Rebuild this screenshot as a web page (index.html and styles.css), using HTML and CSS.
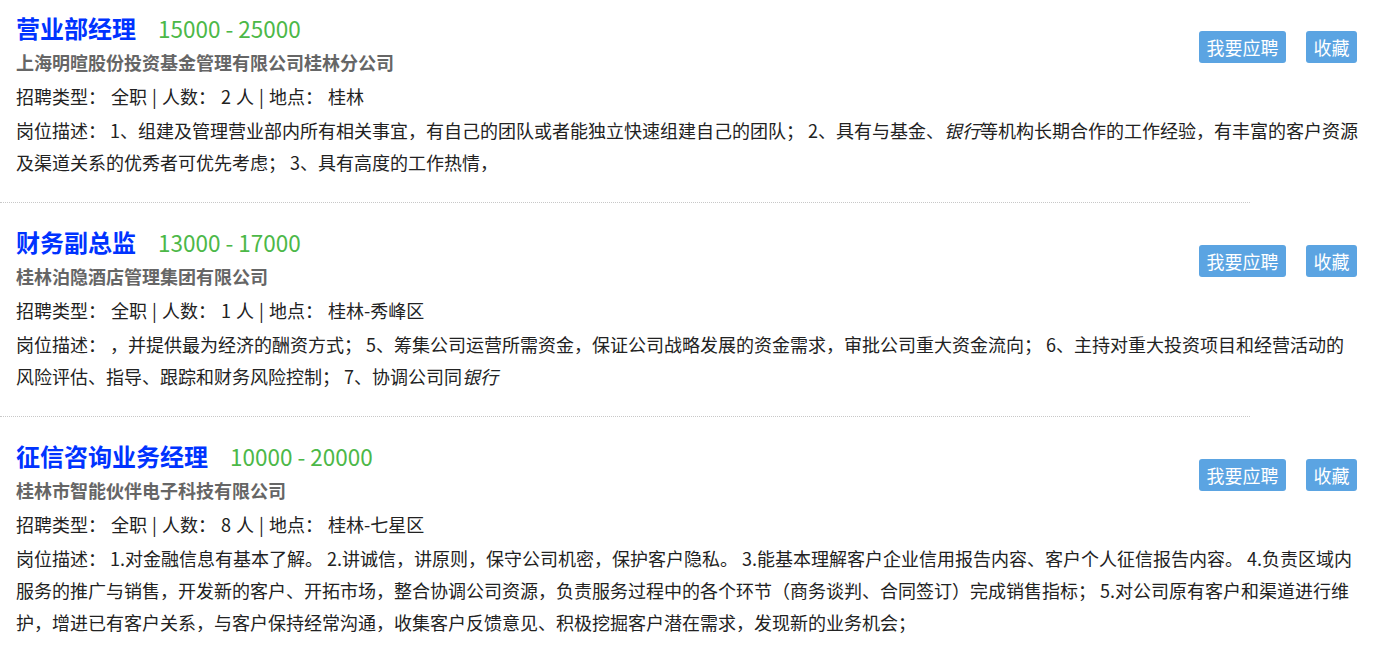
FILE: index.html
```html
<!DOCTYPE html>
<html lang="zh-CN">
<head>
  <meta charset="UTF-8" />
  <meta name="viewport" content="width=device-width, initial-scale=1.0" />
  <title>职位列表</title>
  <link rel="stylesheet" href="styles.css">
</head>
<body>
  <main class="job-list">
    <div class="job">
      <div class="job-actions">
        <a href="#" class="btn">我要应聘</a>
        <a href="#" class="btn">收藏</a>
      </div>
      <div class="job-head">
        <a href="#" class="job-title">营业部经理</a>
        <span class="salary">15000 - 25000</span>
      </div>
      <div class="company">上海明暄股份投资基金管理有限公司桂林分公司</div>
      <div class="meta">招聘类型： 全职 | 人数： 2 人 | 地点： 桂林</div>
      <p class="desc">岗位描述： 1、组建及管理营业部内所有相关事宜，有自己的团队或者能独立快速组建自己的团队； 2、具有与基金、<em>银行</em>等机构长期合作的工作经验，有丰富的客户资源及渠道关系的优秀者可优先考虑； 3、具有高度的工作热情，</p>
    </div>

    <div class="job">
      <div class="job-actions">
        <a href="#" class="btn">我要应聘</a>
        <a href="#" class="btn">收藏</a>
      </div>
      <div class="job-head">
        <a href="#" class="job-title">财务副总监</a>
        <span class="salary">13000 - 17000</span>
      </div>
      <div class="company">桂林泊隐酒店管理集团有限公司</div>
      <div class="meta">招聘类型： 全职 | 人数： 1 人 | 地点： 桂林-秀峰区</div>
      <p class="desc">岗位描述： ，并提供最为经济的酬资方式； 5、筹集公司运营所需资金，保证公司战略发展的资金需求，审批公司重大资金流向； 6、主持对重大投资项目和经营活动的风险评估、指导、跟踪和财务风险控制； 7、协调公司同<em>银行</em></p>
    </div>

    <div class="job">
      <div class="job-actions">
        <a href="#" class="btn">我要应聘</a>
        <a href="#" class="btn">收藏</a>
      </div>
      <div class="job-head">
        <a href="#" class="job-title">征信咨询业务经理</a>
        <span class="salary">10000 - 20000</span>
      </div>
      <div class="company">桂林市智能伙伴电子科技有限公司</div>
      <div class="meta">招聘类型： 全职 | 人数： 8 人 | 地点： 桂林-七星区</div>
      <p class="desc">岗位描述： 1.对金融信息有基本了解。 2.讲诚信，讲原则，保守公司机密，保护客户隐私。 3.能基本理解客户企业信用报告内容、客户个人征信报告内容。 4.负责区域内服务的推广与销售，开发新的客户、开拓市场，整合协调公司资源，负责服务过程中的各个环节（商务谈判、合同签订）完成销售指标； 5.对公司原有客户和渠道进行维护，增进已有客户关系，与客户保持经常沟通，收集客户反馈意见、积极挖掘客户潜在需求，发现新的业务机会；</p>
    </div>
  </main>
</body>
</html>
```

FILE: styles.css
```css
:root{
  --blue:#0033ff;
  --green:#4cb848;
  --btn:#5ba4e2;
}
*{box-sizing:border-box}
body{
  margin:0;background:#fff;color:#222;
  font-family:"Microsoft YaHei","Noto Sans CJK SC",sans-serif;
  font-size:18px;
}
.job-list{padding:0 25px 0 16px}
.job{padding-top:22px}
.job:first-child{padding-top:11px}
.job::after{
  content:"";display:block;margin:24px 0 0 -16px;
  border-bottom:1px dotted #c8c8c8;width:1250px;
}
.job:last-child::after{display:none}

.job-head{display:flex;align-items:baseline;height:34px;line-height:34px}
.job-title{
  color:var(--blue);font-size:24px;font-weight:700;text-decoration:none;
}
.salary{color:var(--green);font-size:22.5px;margin-left:22px}

.company{line-height:34px;font-weight:700;color:#666}
.meta{line-height:34px;word-spacing:1px}
.desc{margin:0;line-height:32px;padding-top:1px}
.desc em{font-style:italic}

.job-actions{
  float:right;display:flex;gap:20px;margin:20px 3px 0 0;
}
.btn{
  display:block;background:var(--btn);color:#fff;text-decoration:none;
  height:32px;line-height:32px;padding:0 7.5px;border-radius:3px;
}
```
